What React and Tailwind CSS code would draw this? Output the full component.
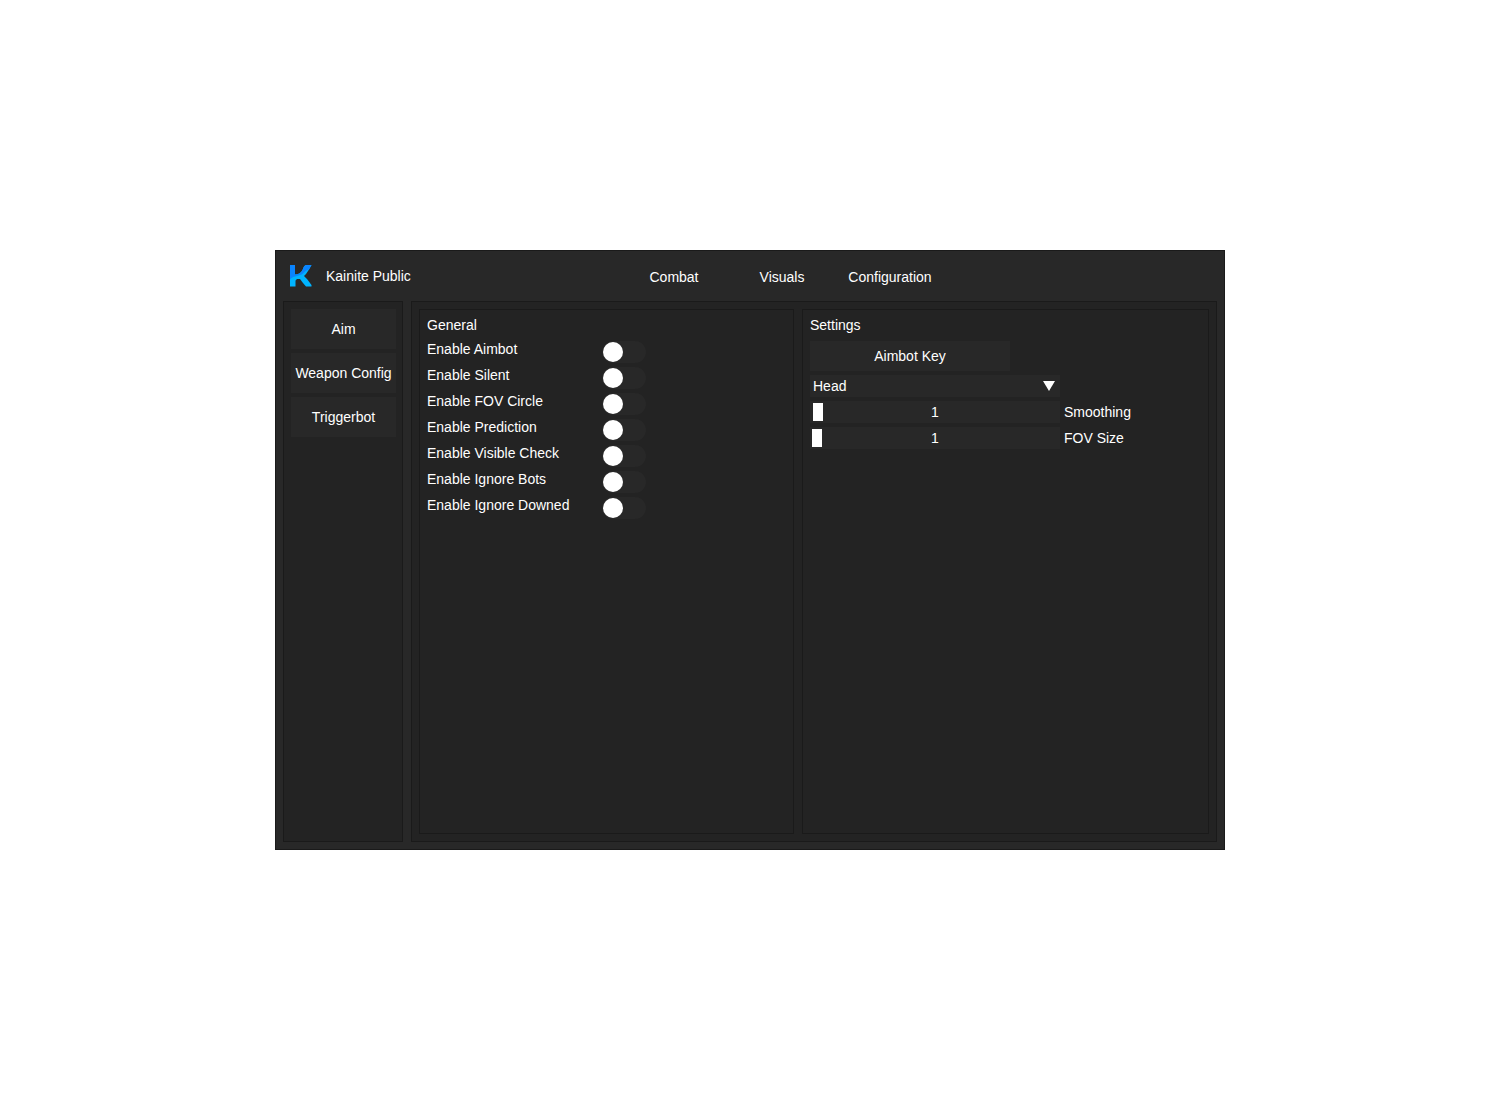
import { useState } from "react";

const tabs = ["Combat", "Visuals", "Configuration"];
const pages = ["Aim", "Weapon Config", "Triggerbot"];
const toggles = [
  "Enable Aimbot",
  "Enable Silent",
  "Enable FOV Circle",
  "Enable Prediction",
  "Enable Visible Check",
  "Enable Ignore Bots",
  "Enable Ignore Downed",
];

function Logo() {
  return (
    <svg width="22" height="22" viewBox="0 0 22 22" aria-hidden="true">
      <path
        d="M0 0H5V9.5C8 9.5 11 8 12.5 5C13.5 2.5 14 0.5 16 0H21.5L19 4.5L16 9L14 11L17 14L21.5 20V21.5H16L13 18L10 14H7L5.5 15.5V21.5H0Z"
        fill="#00b4ff"
      />
      <path
        d="M0 0H5V9.5C8 9.5 11 8 12.5 5C13.5 2.5 14 0.5 16 0H21.5L19 4.5C17 5 15 6 13 8.5C10 11.5 4 10 0 14.5Z"
        fill="#0a84ff"
      />
    </svg>
  );
}

function Toggle({ label }) {
  return (
    <label className="flex items-start">
      <span className="w-[175px]">{label}</span>
      <input
        type="checkbox"
        role="switch"
        className="flex h-[22px] w-11 appearance-none rounded-full bg-[#282828] p-px before:h-5 before:w-5 before:rounded-full before:bg-white checked:justify-end checked:bg-[#0a84ff]"
      />
    </label>
  );
}

function Slider({ label, min, max }) {
  const [value, setValue] = useState(1);

  return (
    <label className="flex items-center gap-1">
      <span className="relative flex h-[22px] w-[250px] bg-[#282828] px-0.5">
        <input
          type="range"
          min={min}
          max={max}
          value={value}
          onChange={(e) => setValue(Number(e.target.value))}
          className="w-full appearance-none bg-transparent [&::-webkit-slider-thumb]:h-[18px] [&::-webkit-slider-thumb]:w-2.5 [&::-webkit-slider-thumb]:appearance-none [&::-webkit-slider-thumb]:bg-white"
        />
        {/* Value sits on top of the track */}
        <span className="pointer-events-none absolute inset-0 flex items-center justify-center">
          {value}
        </span>
      </span>
      {label}
    </label>
  );
}

function Panel({ title, className, children }) {
  return (
    <section className={`border border-[#1a1a1a] p-[7px] ${className}`}>
      <h2 className="mb-2">{title}</h2>
      <div className="flex flex-col items-start gap-1">{children}</div>
    </section>
  );
}

export default function App() {
  return (
    <div className="flex min-h-screen items-center justify-center bg-white">
      <div className="flex min-h-[600px] w-full max-w-[950px] flex-col border border-[#1a1a1a] bg-[#282828] font-['Liberation_Sans',Arial,sans-serif] text-[14px] leading-4 text-white">
        {/* Header */}
        <header className="flex h-[50px] items-center">
          <div className="flex w-[348px] items-center gap-3.5 pl-3.5">
            <Logo />
            <h1>Kainite Public</h1>
          </div>
          <nav className="flex gap-2 pt-0.5">
            {tabs.map((tab) => (
              <button key={tab} className="h-8 w-[100px]">
                {tab}
              </button>
            ))}
          </nav>
        </header>

        <div className="flex flex-1 gap-2 px-[7px] pb-[7px]">
          {/* Sidebar */}
          <aside className="flex w-[120px] shrink-0 flex-col gap-1 border border-[#1a1a1a] bg-[#232323] py-[7px] pr-1.5 pl-[7px]">
            {pages.map((page) => (
              <button
                key={page}
                className="h-10 bg-[#282828] whitespace-nowrap"
              >
                {page}
              </button>
            ))}
          </aside>

          {/* Content */}
          <main className="flex flex-1 gap-2 border border-[#1a1a1a] bg-[#232323] p-[7px]">
            <Panel title="General" className="w-[375px]">
              {toggles.map((label) => (
                <Toggle key={label} label={label} />
              ))}
            </Panel>

            <Panel title="Settings" className="flex-1">
              <button className="h-[30px] w-[200px] bg-[#282828]">
                Aimbot Key
              </button>
              <div className="relative">
                <select
                  aria-label="Target bone"
                  className="h-[22px] w-[250px] appearance-none bg-[#282828] px-[3px]"
                >
                  <option>Head</option>
                  <option>Neck</option>
                  <option>Chest</option>
                </select>
                <svg
                  width="12"
                  height="10"
                  viewBox="0 0 12 10"
                  className="pointer-events-none absolute top-1.5 right-[5px]"
                >
                  <path d="M0 0H12L6 10Z" fill="#fff" />
                </svg>
              </div>
              <Slider label="Smoothing" min={0} max={200} />
              <Slider label="FOV Size" min={1} max={500} />
            </Panel>
          </main>
        </div>
      </div>
    </div>
  );
}
